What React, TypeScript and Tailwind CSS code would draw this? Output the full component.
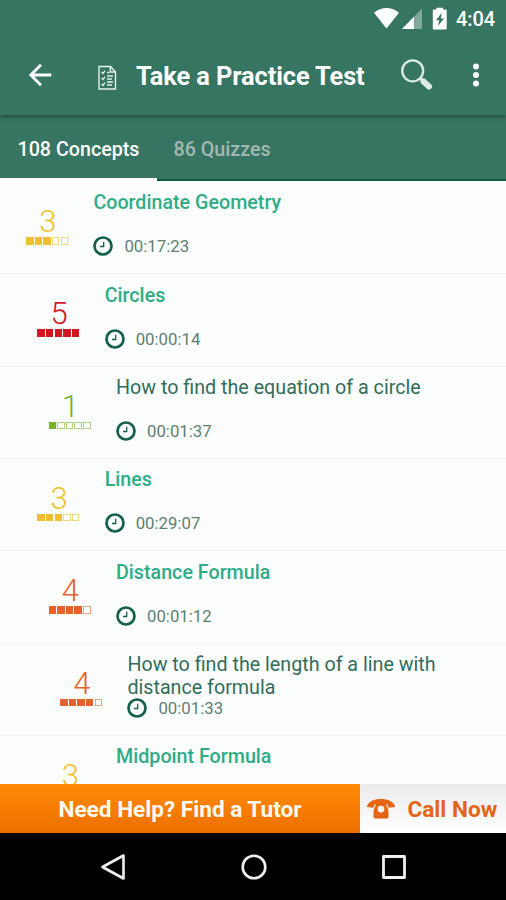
import React from 'react';

type Concept = {
  title: string;
  time?: string;
  level: number;
  depth: number;
  heading: boolean;
};

const concepts: Concept[] = [
  { title: 'Coordinate Geometry', time: '00:17:23', level: 3, depth: 0, heading: true },
  { title: 'Circles', time: '00:00:14', level: 5, depth: 1, heading: true },
  { title: 'How to find the equation of a circle', time: '00:01:37', level: 1, depth: 2, heading: false },
  { title: 'Lines', time: '00:29:07', level: 3, depth: 1, heading: true },
  { title: 'Distance Formula', time: '00:01:12', level: 4, depth: 2, heading: true },
  { title: 'How to find the length of a line with distance formula', time: '00:01:33', level: 4, depth: 3, heading: false },
  { title: 'Midpoint Formula', level: 3, depth: 2, heading: true },
];

const getLevelColor = (level: number) => {
  switch (level) {
    case 1: return 'text-[#77b22b]';
    case 3: return 'text-[#f0c02c]';
    case 4: return 'text-[#e5632a]';
    default: return 'text-[#d3151f]';
  }
};

const getIndent = (depth: number) => {
  switch (depth) {
    case 0: return 'pl-[26px]';
    case 1: return 'pl-[37.3px]';
    case 2: return 'pl-[48.6px]';
    default: return 'pl-[60px]';
  }
};

function StatusBar() {
  return (
    <div className="flex h-[38px] items-center justify-end pr-[10px]">
      <svg className="mt-[1px] h-[30px] w-[80px] shrink-0" viewBox="0 0 80 30">
        {/* wifi */}
        <path d="M1 7.800C8 1.400 19 1.400 26 7.800L13.500 23.500Z" fill="#fff" />
        {/* signal */}
        <path d="M49 3.500v20.500H29Z" fill="#7fa99b" />
        <path d="M41 11.700v12.300H29Z" fill="#fff" />
        {/* battery */}
        <path d="M61 4.500h2.500V2.800h6.500v1.700h2.500a1.200 1.200 0 0 1 1.200 1.200v17.600a1.200 1.200 0 0 1-1.200 1.200H61a1.200 1.200 0 0 1-1.200-1.200V5.700A1.200 1.200 0 0 1 61 4.500Z" fill="#fff" />
        <path d="M68.800 7.800 63 15.300h3.200l-1.200 5.800 6-7.600h-3.200Z" fill="#367562" />
      </svg>
      <span className="ml-[3px] w-[40px] text-[20px] leading-[22px] font-medium tracking-[-0.1px] whitespace-nowrap">4:04</span>
    </div>
  );
}

function Toolbar() {
  return (
    <div className="flex h-[77px] items-center">
      <svg className="mb-[3px] ml-[28px] h-[24px] w-[24px]" viewBox="0 0 24 24" fill="none" stroke="#fff" strokeWidth="2.800">
        <path d="M23.300 12H3M13 1.800 2.800 12 13 22.200" />
      </svg>
      <svg className="mt-[2px] ml-[45px] h-[26px] w-[20px]" viewBox="0 0 20 26" fill="none" stroke="#e6f0ec" strokeWidth="1.400">
        <path d="M2 1.500h11.500l5 5.500v17H2Z" />
        <path d="M13.300 1.500V7h5" />
        <path d="m4.500 7 1.500 1.500 2-2.800M4.500 13 6 14.500l2-2.800M4.500 19 6 20.500l2-2.800" strokeWidth="1.300" />
        <path d="M10 7.500h2.500M10 11h6M10 14h5M10 17h6M10 20h5" strokeWidth="1.300" />
      </svg>
      <h1 className="mb-[2px] ml-[19px] w-[240px] text-[25.400px] leading-[30px] font-bold tracking-[-0.1px] whitespace-nowrap">Take a Practice Test</h1>
      <svg className="mb-[3px] ml-[24px] h-[34px] w-[34px]" viewBox="0 0 34 34" fill="none" stroke="#dcebe6">
        <circle cx="12.700" cy="12.800" r="10.500" strokeWidth="2.300" />
        <path d="m20 20 3.500 3.500" strokeWidth="2.800" />
        <path d="m23.500 23.500 5.500 5" strokeWidth="6" strokeLinecap="round" />
      </svg>
      <svg className="mb-[3px] ml-[38px] h-[26px] w-[8px]" viewBox="0 0 8 26" fill="#fff">
        <circle cx="4" cy="4.500" r="3" />
        <circle cx="4" cy="13" r="3" />
        <circle cx="4" cy="21.500" r="3" />
      </svg>
    </div>
  );
}

function Tabs() {
  return (
    <div className="flex h-[66px] text-[19.700px] font-medium whitespace-nowrap">
      <button className="flex w-[157px] items-center justify-center border-b-[3px] border-[#fcfefd] pt-[7px]">108 Concepts</button>
      <button className="flex flex-1 items-center border-b-[2px] border-[#0d5b45] pt-[6px] pl-[16.500px] text-[#a3b8b0]">86 Quizzes</button>
    </div>
  );
}

function ConceptRow({ concept }: { concept: Concept }) {
  return (
    <li className={`flex h-[92.33px] shrink-0 border-b border-[#eff2f2] ${getIndent(concept.depth)}`}>
      <div className={`w-[42px] shrink-0 ${getLevelColor(concept.level)}`}>
        <div className="mt-[22px] pl-[1.500px] text-center text-[31px] leading-[36px] font-[350]">{concept.level}</div>
        <div className="mt-[-3px] flex justify-between">
          {[1, 2, 3, 4, 5].map((step) => (
            <span
              key={step}
              className={`h-[7.5px] w-[7.5px] border border-current ${step <= concept.level ? 'bg-current' : 'opacity-60'}`}
            />
          ))}
        </div>
      </div>
      <div className="ml-[25.400px] pt-[9.200px]">
        <h2 className={`h-[45.300px] w-[330px] text-[19.700px] leading-[23px] ${concept.heading ? 'font-[550] text-[#2fac86]' : 'text-[#316d5a]'}`}>
          {concept.title}
        </h2>
        {concept.time && (
          <div className="flex items-center">
            <svg className="h-[20px] w-[20px]" viewBox="0 0 20 20" fill="none" stroke="#15604b">
              <circle cx="10" cy="10" r="8.500" strokeWidth="2.700" />
              <path d="M10.700 5.800v4.700H7" strokeWidth="1.300" />
            </svg>
            <span className="ml-[11px] text-[16.800px] leading-[20px] text-[#5e7f73]">{concept.time}</span>
          </div>
        )}
      </div>
    </li>
  );
}

function ActionBar() {
  return (
    <div className="flex h-[49px] shrink-0 text-[22.600px] font-bold whitespace-nowrap">
      <button className="flex w-[360px] items-center justify-center bg-linear-to-b from-[#ff8a05] to-[#ee7002] pt-[2px] text-[#fffaf2]">
        Need Help? Find a Tutor
      </button>
      <button className="flex flex-1 items-center bg-linear-to-b from-[#ebebeb] to-white pt-[2px] text-[#e46516]">
        <svg className="ml-[6px] mb-[2px] h-[22px] w-[30px]" viewBox="0 0 30 22" fill="currentColor">
          <path d="M.8 9C2 3.500 8 1 15 1s13 2.500 14.200 8l-6.700.700-1-3.200h-13l-1 3.200Z" />
          <path fillRule="evenodd" d="M10 5.500h10c.2 3 2.500 5 2.500 8v5.500a1.500 1.500 0 0 1-1.500 1.500H9a1.500 1.500 0 0 1-1.500-1.500v-5.500c0-3 2.300-5 2.500-8ZM15 7.700a3.400 3.400 0 1 0 0 6.800 3.400 3.400 0 0 0 0-6.800Z" />
        </svg>
        <span className="ml-[11.500px]">Call Now</span>
      </button>
    </div>
  );
}

function NavBar() {
  return (
    <div className="flex h-[67px] shrink-0 items-center bg-black">
      <svg className="ml-[99px] h-[28px] w-[28px]" viewBox="0 0 28 28" fill="none" stroke="#f0f0f0" strokeWidth="2.600" strokeLinejoin="round">
        <path d="M24.500 2.500v23L3.500 14Z" />
      </svg>
      <svg className="ml-[113px] h-[28px] w-[28px]" viewBox="0 0 28 28" fill="none" stroke="#f0f0f0" strokeWidth="2.600">
        <circle cx="14" cy="14" r="11.300" />
      </svg>
      <svg className="ml-[112px] h-[28px] w-[28px]" viewBox="0 0 28 28" fill="none" stroke="#f0f0f0" strokeWidth="2.800" strokeLinejoin="round">
        <rect x="3.500" y="3.500" width="21" height="21" />
      </svg>
    </div>
  );
}

export default function App() {
  return (
    <div className="flex h-[900px] w-[506px] flex-col overflow-hidden bg-[#fcfefd] font-['Roboto',sans-serif]">
      <header className="shrink-0 bg-[#367562] text-white">
        <div className="shadow-[0_2px_4px_rgba(0,0,0,0.35)]">
          <StatusBar />
          <Toolbar />
        </div>
        <Tabs />
      </header>
      <ul className="flex min-h-0 flex-1 flex-col overflow-hidden pt-[1px]">
        {concepts.map((concept) => (
          <ConceptRow key={concept.title} concept={concept} />
        ))}
      </ul>
      <ActionBar />
      <NavBar />
    </div>
  );
}
